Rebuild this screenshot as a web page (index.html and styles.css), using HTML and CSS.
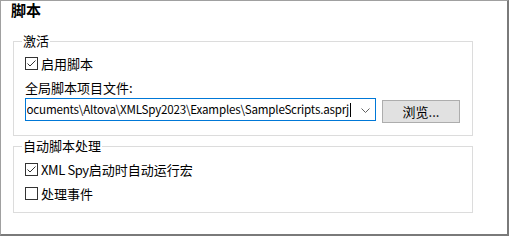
FILE: index.html
```html
<!DOCTYPE html>
<html lang="zh-CN">
<head>
<meta charset="utf-8">
<title>脚本</title>
<link rel="stylesheet" href="styles.css">
</head>
<body>
<div class="frame">
  <div class="title">脚本</div>
  <fieldset class="group group-activate">
    <legend>激活</legend>
    <label class="row">
      <svg class="check" width="13" height="13" viewBox="0 0 13 13"><rect x="0.5" y="0.5" width="12" height="12" fill="#fff" stroke="#333"/><polyline points="2.5,6.5 5,9 10.5,3.5" fill="none" stroke="#333" stroke-width="1"/></svg>
      <span>启用脚本</span>
    </label>
    <div class="row">全局脚本项目文件:</div>
    <div class="file-line">
      <div class="combo">
        <div class="combo-text"><span>C:\Users\user\Documents\Altova\XMLSpy2023\Examples\SampleScripts.asprj</span><i class="caret"></i></div>
        <svg class="chev" width="10" height="6" viewBox="0 0 10 6"><polyline points="0.5,0.5 4.5,4.5 8.5,0.5" fill="none" stroke="#606060" stroke-width="1"/></svg>
      </div>
      <button class="btn" type="button">浏览...</button>
    </div>
  </fieldset>
  <fieldset class="group group-auto">
    <legend>自动脚本处理</legend>
    <label class="row">
      <svg class="check" width="13" height="13" viewBox="0 0 13 13"><rect x="0.5" y="0.5" width="12" height="12" fill="#fff" stroke="#333"/><polyline points="2.5,6.5 5,9 10.5,3.5" fill="none" stroke="#333" stroke-width="1"/></svg>
      <span><span class="latin">XML Spy</span>启动时自动运行宏</span>
    </label>
    <label class="row row-second">
      <svg class="check" width="13" height="13" viewBox="0 0 13 13"><rect x="0.5" y="0.5" width="12" height="12" fill="#fff" stroke="#333"/></svg>
      <span>处理事件</span>
    </label>
  </fieldset>
</div>
</body>
</html>
```

FILE: styles.css
```css
* { box-sizing: border-box; }
html, body {
  margin: 0;
  padding: 0;
  background: #fff;
}
body {
  font-family: "Noto Sans CJK SC", "Noto Sans", sans-serif;
  font-size: 13px;
  color: #000;
}
.frame {
  width: 509px;
  height: 236px;
  border-left: 1px solid #a0a0a0;
  border-top: 1px solid #a0a0a0;
  border-right: 2px solid #7a7a7a;
  border-bottom: 2px solid #7a7a7a;
  display: flex;
  flex-direction: column;
}
.title {
  font-size: 15px;
  font-weight: bold;
  line-height: 18px;
  height: 18px;
  padding-left: 10px;
  margin-bottom: 14px;
}
.group {
  margin: 0 0 0 12px;
  width: 460px;
  border: 1px solid #dcdcdc;
  padding: 0 12px 0 11px;
  min-width: 0;
}
.group legend {
  margin-left: -3px;
  padding: 0 1px;
  line-height: 16px;
  height: 16px;
}
.group-activate {
  padding-top: 5px;
  padding-bottom: 12px;
}
.group-auto {
  margin-top: 2px;
  padding-top: 6px;
  padding-bottom: 9px;
}
.row {
  display: flex;
  align-items: center;
  height: 19px;
  line-height: 19px;
  white-space: nowrap;
}
.row + .row { margin-top: 5px; }
.latin { letter-spacing: -0.4px; }
.check {
  display: block;
  flex: none;
  margin-right: 3px;
}
.file-line {
  display: flex;
  align-items: flex-start;
  margin-top: 1px;
}
.combo {
  width: 351px;
  height: 23px;
  border: 1px solid #0078d7;
  background: #fff;
  display: flex;
  align-items: center;
}
.combo-text {
  flex: 1;
  min-width: 0;
  overflow: hidden;
  display: flex;
  justify-content: flex-end;
  align-items: center;
  white-space: nowrap;
  margin-left: 1px;
  height: 21px;
  line-height: 21px;
  font-size: 11.6px;
  letter-spacing: -0.2px;
}
.combo-text span { flex: none; }
.caret {
  flex: none;
  display: block;
  width: 1px;
  height: 14px;
  margin-left: 1px;
  background: #000;
}
.chev {
  display: block;
  flex: none;
  margin: 2px 4px 0 10px;
}
.btn {
  margin: 2px 0 0 6px;
  width: 78px;
  height: 23px;
  background: #e1e1e1;
  border: 1px solid #adadad;
  font: inherit;
  color: #000;
  padding: 0;
  line-height: 21px;
}
```
